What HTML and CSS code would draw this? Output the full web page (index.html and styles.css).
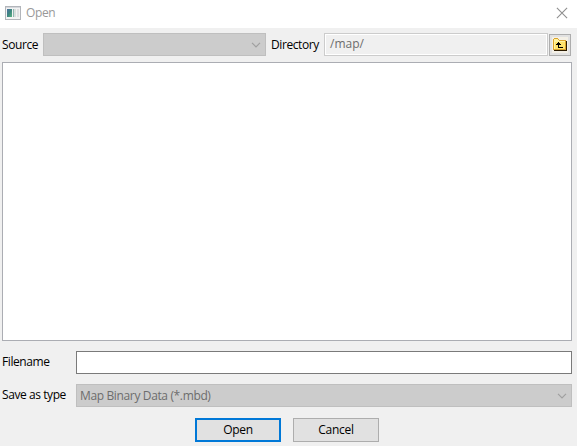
FILE: index.html
```html
<!DOCTYPE html>
<html lang="en">
<head>
<meta charset="utf-8">
<title>Open</title>
<link rel="stylesheet" href="styles.css">
</head>
<body>
<div class="dialog">
  <header class="titlebar">
    <svg class="app-icon" width="16" height="14" viewBox="0 0 16 14">
      <defs><linearGradient id="pane" x1="0" y1="0" x2="1" y2="1"><stop offset="0" stop-color="#4d6fa0"/><stop offset=".5" stop-color="#3d8680"/><stop offset="1" stop-color="#5db482"/></linearGradient></defs>
      <path fill="#b2b5ba" d="M0 0h16v14H0z"/>
      <path fill="#f3f3f3" d="M1 2h14v11H1z"/>
      <path fill="#d5d7dc" d="M1 1h14v1H1z"/>
      <path fill="url(#pane)" d="M2 3h5v8H2z"/>
      <path fill="#8fb6b0" d="M8 3h1v8H8z"/>
      <path fill="#d8dedd" d="M9 3h2v8H9z"/>
      <path fill="#dfdfe1" d="M12 3h2v8h-2z"/>
    </svg>
    <span class="title">Open</span>
    <svg class="close" width="12" height="12" viewBox="0 0 12 12"><path d="M.9.9l10.2 10.2M11.1.9L.9 11.1" stroke="#8f8f8f" stroke-width="1.1"/></svg>
  </header>
  <div class="toolbar">
    <span class="label source">Source</span>
    <div class="select source-select"><svg width="10" height="6" viewBox="0 0 10 6"><path d="M1 .8l4 4 4-4" fill="none" stroke="#a0a0a0" stroke-width="1.2"/></svg></div>
    <span class="label directory">Directory</span>
    <div class="path">/map/</div>
    <button class="up" aria-label="Up">
      <svg width="16" height="16" viewBox="0 0 16 16" shape-rendering="crispEdges">
        <path fill="#f4f0e6" d="M0 0h16v16H0z"/>
        <path fill="#dba32b" d="M2 1h4v1h1v1h7v10H1V2h1z"/>
        <path fill="#fff3a0" d="M2 2h4v1h1v1h6v8H2z"/>
        <path fill="#ffe36b" d="M3 5h10v7H3z"/>
        <path fill="#2a1a00" d="M14 4h1v10h-1zM2 13h12v1H2z"/>
        <path fill="#000" d="M6 5h1v1h1v1h1v1H7v2h4v1H6V8H4V7h1V6h1z"/>
      </svg>
    </button>
  </div>
  <div class="file-list"></div>
  <div class="row">
    <span class="label filename">Filename</span>
    <input class="name-input" type="text" aria-label="Filename">
  </div>
  <div class="row type-row">
    <span class="label type">Save as type</span>
    <div class="select type-select"><span class="value">Map Binary Data (*.mbd)</span><svg width="10" height="6" viewBox="0 0 10 6"><path d="M1 .8l4 4 4-4" fill="none" stroke="#a0a0a0" stroke-width="1.2"/></svg></div>
  </div>
  <div class="actions">
    <button class="btn primary">Open</button>
    <button class="btn">Cancel</button>
  </div>
</div>
</body>
</html>
```
FILE: styles.css
```css
* { box-sizing: border-box; }
body { margin: 0; background: #f0f0f0; color: #000; font: 12px/16px "Open Sans", "Noto Sans", sans-serif; }
button, input { font: inherit; color: inherit; border-radius: 0; margin: 0; padding: 0; }
.dialog { width: 577px; height: 446px; overflow: hidden; white-space: nowrap; }
.titlebar { display: flex; align-items: center; height: 28px; padding: 0 9px 3px 5px; background: #fff; color: #999; }
.app-icon { margin-right: 5px; }
.title { letter-spacing: -0.4px; }
.close { margin-left: auto; }
.toolbar { display: flex; align-items: center; height: 23px; margin: 5px 5px 0 2px; }
.label { flex: none; letter-spacing: -0.42px; }
.source { width: 41px; }
.directory { width: 53px; margin-left: 5px; }
.select { display: flex; align-items: center; height: 23px; padding: 0 4px 0 3px; background: #ccc; border: 1px solid #bfbfbf; color: #6d6d6d; }
.select svg { margin-left: auto; }
.source-select { width: 223px; }
.path { width: 224px; height: 23px; padding: 2px 5px; border: 1px solid #ccc; box-shadow: inset 0 0 0 1px #fff; color: #6d6d6d; }
.up { display: flex; align-items: center; justify-content: center; width: 22px; height: 22px; margin: 1px 0 0 1px; background: #e1e1e1; border: 1px solid #adadad; }
.up svg { flex: none; }
.file-list { height: 279px; margin: 6px 5px 0 2px; background: #fff; border: 1px solid #abadb3; }
.row { display: flex; align-items: center; height: 23px; margin: 10px 5px 0 2px; }
.row .label { width: 74px; padding-bottom: 1px; }
.name-input { flex: 1; height: 23px; background: #fff; border: 1px solid #7a7a7a; }
.type-select { flex: 1; }
.value { letter-spacing: -0.36px; }
.actions { display: flex; gap: 12px; margin: 11px 0 0 195px; }
.btn { width: 86px; height: 24px; background: #e1e1e1; border: 1px solid #adadad; letter-spacing: -0.3px; }
.primary { border: 2px solid #0078d7; }
```
